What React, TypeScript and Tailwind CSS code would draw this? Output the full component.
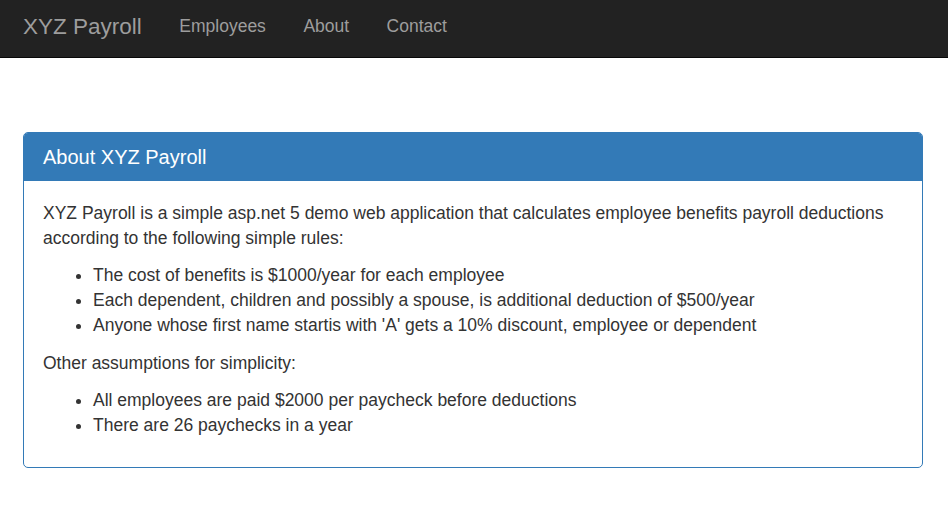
import React from "react";

export default function App() {
  return (
    <div className="min-h-[518px] bg-white text-[#333] text-[17.5px] leading-[25px]" style={{ fontFamily: '"Liberation Sans", Arial, sans-serif' }}>
      <nav className="h-[58px] bg-[#222] border-b border-[#080808] flex items-center">
        <div className="ml-[23px] flex items-center">
          <span className="text-[22.5px] text-[#9d9d9d] leading-[25px] -mt-[5px]">XYZ Payroll</span>
          <div className="flex ml-[18.75px]">
            <a className="px-[18.75px] text-[#9d9d9d] -mt-[4px]">Employees</a>
            <a className="px-[18.75px] text-[#9d9d9d] -mt-[4px]">About</a>
            <a className="px-[18.75px] text-[#9d9d9d] -mt-[4px]">Contact</a>
          </div>
        </div>
      </nav>
      <div className="ml-[23px] w-[900px] mt-[74px]">
        <div className="border border-[#337ab7] rounded-[5px]">
          <div className="bg-[#337ab7] text-white text-[20px] h-[48px] flex items-center px-[19px] rounded-t-[4px]">
            About XYZ Payroll
          </div>
          <div className="px-[19px] pt-[19.5px] pb-[16.5px]">
            <p className="mb-[12.5px]">
              XYZ Payroll is a simple asp.net 5 demo web application that calculates employee benefits payroll deductions according to the following simple rules:
            </p>
            <ul className="list-disc pl-[50px] mb-[12.5px]">
              <li>The cost of benefits is $1000/year for each employee</li>
              <li>Each dependent, children and possibly a spouse, is additional deduction of $500/year</li>
              <li>Anyone whose first name startis with 'A' gets a 10% discount, employee or dependent</li>
            </ul>
            <p className="mb-[12.5px]">Other assumptions for simplicity:</p>
            <ul className="list-disc pl-[50px] mb-[12.5px]">
              <li>All employees are paid $2000 per paycheck before deductions</li>
              <li>There are 26 paychecks in a year</li>
            </ul>
          </div>
        </div>
      </div>
    </div>
  );
}
